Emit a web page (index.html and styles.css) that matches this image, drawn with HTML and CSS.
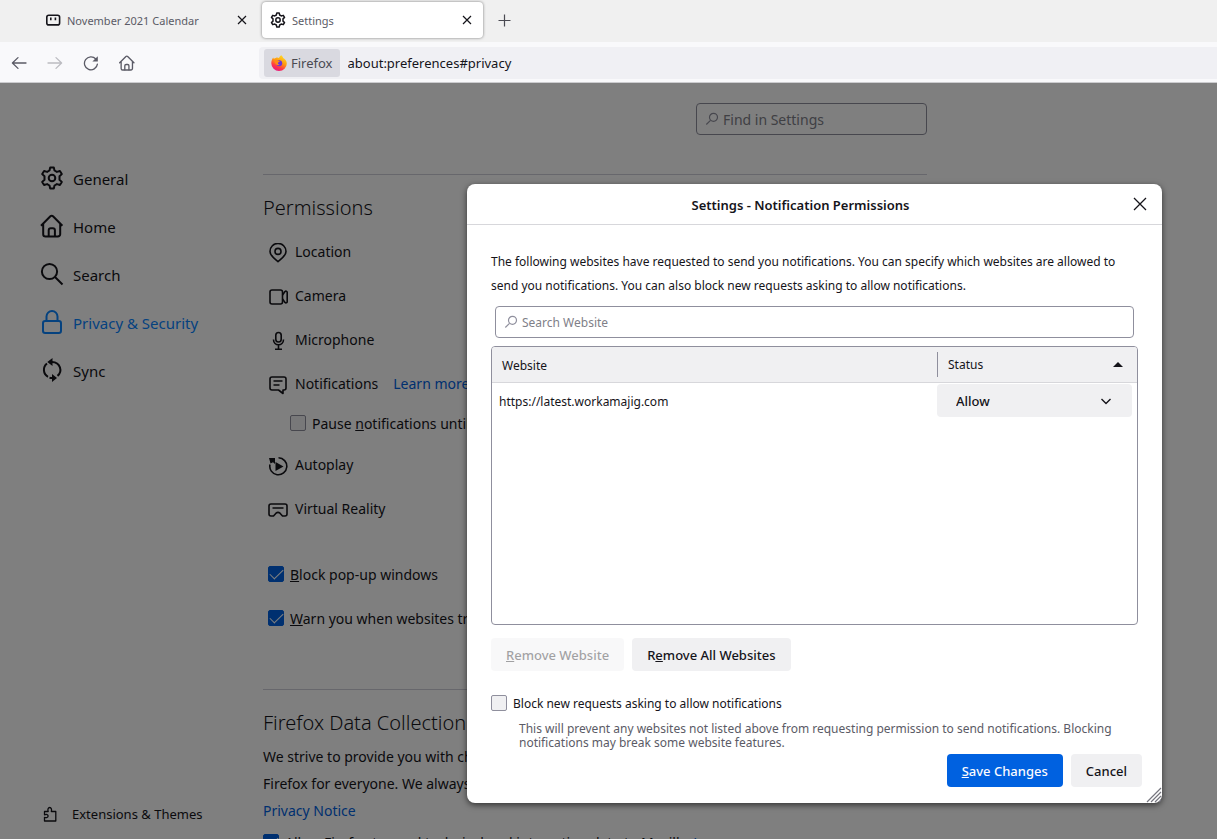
FILE: index.html
```html
<!DOCTYPE html>
<html lang="en">
<head>
    <meta charset="UTF-8">
    <meta name="viewport" content="width=device-width, initial-scale=1.0">
    <title>Settings</title>
    <link rel="stylesheet" href="styles.css">
</head>
<body>

    <!-- Tab strip -->
    <div class="tabs">
        <div class="tab">
            <svg class="icon16" viewBox="0 0 16 16" fill="none" stroke="#15141a" stroke-width="1.6"><rect x="1.8" y="3.3" width="12.8" height="9.6" rx="2"/><path d="M5.8 5.6v2.6M10.4 5.6v2.6"/></svg>
            <span class="tab-title">November 2021 Calendar</span>
            <button class="icon-btn" aria-label="Close tab"><svg class="icon16" viewBox="0 0 16 16" stroke="#15141a" stroke-width="1.2"><path d="M4 4l8 8M12 4l-8 8"/></svg></button>
        </div>
        <div class="tab tab-active">
            <svg class="icon16" viewBox="0 0 24 24" fill="none" stroke="#15141a" stroke-width="2.2" stroke-linejoin="round"><use href="#gear"/></svg>
            <span class="tab-title">Settings</span>
            <button class="icon-btn" aria-label="Close tab"><svg class="icon16" viewBox="0 0 16 16" stroke="#15141a" stroke-width="1.2"><path d="M4 4l8 8M12 4l-8 8"/></svg></button>
        </div>
        <button class="icon-btn new-tab" aria-label="New tab"><svg class="icon16" viewBox="0 0 16 16" stroke="#4a4a52" stroke-width="1.2"><path d="M8.500 2.500v12M2.500 8.500h12"/></svg></button>
    </div>

    <!-- Toolbar -->
    <div class="toolbar">
        <div class="toolbar-buttons">
            <button class="icon-btn" aria-label="Back"><svg class="icon16" viewBox="0 0 16 16" fill="none" stroke="#5b5b66" stroke-width="1.3" stroke-linecap="round" stroke-linejoin="round"><path d="M15 8H1.600M7 2.600L1.400 8 7 13.400"/></svg></button>
            <button class="icon-btn" aria-label="Forward"><svg class="icon16" viewBox="0 0 16 16" fill="none" stroke="#bcbcc1" stroke-width="1.3" stroke-linecap="round" stroke-linejoin="round"><path d="M1 8h13.400M9 2.600L14.600 8 9 13.400"/></svg></button>
            <button class="icon-btn" aria-label="Reload"><svg class="icon16" viewBox="0 0 16 16" fill="none" stroke="#5b5b66" stroke-width="1.3" stroke-linecap="round"><path d="M14.400 9.200A6.500 6.500 0 1 1 12.800 4"/><path d="M14.800 1.200v5.400H9.400z" fill="#5b5b66" stroke="none"/></svg></button>
            <button class="icon-btn" aria-label="Home"><svg class="icon16" viewBox="0 0 24 24" fill="none" stroke="#5b5b66" stroke-width="2" stroke-linecap="round" stroke-linejoin="round"><use href="#house"/></svg></button>
        </div>
        <div class="urlbar">
            <div class="identity">
                <svg class="icon16" viewBox="0 0 16 16">
                    <defs>
                        <linearGradient id="flame" x1="0.8" y1="0" x2="0.3" y2="1"><stop offset="0" stop-color="#ffe226"/><stop offset=".45" stop-color="#ff980e"/><stop offset=".75" stop-color="#ff3647"/><stop offset="1" stop-color="#e31587"/></linearGradient>
                    </defs>
                    <path fill="url(#flame)" d="M10.300.2c1.200 1 1.600 1.900 1.900 2.700 2 1 3.600 3.100 3.600 5.600A7.700 7.400 0 0 1 8.100 15.900 7.700 7.600 0 0 1 .3 8.300C.3 6 1 4 2.200 2.400l.7 1.500C3.400 3.300 4 3 4.700 2.900 6 2.300 7 2.600 8 3c.4-1.200 1.100-2.100 2.300-2.800z"/>
                    <circle cx="8.200" cy="8.200" r="3" fill="#6a35d8"/>
                    <path fill="#ff8a16" d="M3 5.200c1.800-1 3.200-.6 4.300.5l1.500.3c-.2 1-1.300 1.200-1.800 1.700-.3.900.5 1.800 1.700 1.700-1 1.200-3.200 1-4-.3C4.100 8 3.300 6.800 3 5.200z"/>
                </svg>
                <span>Firefox</span>
            </div>
            <input class="url" type="text" aria-label="Address" value="about:preferences#privacy">
        </div>
    </div>

    <!-- Settings page -->
    <div class="page">
        <nav class="sidebar">
            <ul class="categories">
                <li><a href="#general"><svg class="icon24" viewBox="0 0 24 24"><g id="gear"><circle cx="12" cy="12" r="3.300"/><path d="M10.200 1.400h3.600l.7 3.100 2.400 1.400 3-.9 1.900 3.100-2.300 2.200v3.400l2.300 2.200-1.900 3.100-3-.9-2.400 1.400-.7 3.100h-3.600l-.7-3.100-2.400-1.400-3 .9-1.900-3.100 2.300-2.200v-3.400L2.200 8.100l1.900-3.100 3 .9 2.400-1.400z"/></g></svg><span>General</span></a></li>
                <li><a href="#home"><svg class="icon24" viewBox="0 0 24 24"><g id="house"><path d="M1 11.700L10.400 2.300a1.800 1.800 0 0 1 2.600 0l9.400 9.400M3.200 10v10.200a2.300 2.300 0 0 0 2.300 2.300h12.400a2.300 2.300 0 0 0 2.300-2.300V10"/><path d="M8.700 22.300v-6a2 2 0 0 1 2-2h2.200a2 2 0 0 1 2 2v6"/></g></svg><span>Home</span></a></li>
                <li><a href="#search"><svg class="icon24" viewBox="0 0 24 24"><circle cx="9.500" cy="9.500" r="7.600"/><path d="M15 15l7.500 7.500"/></svg><span>Search</span></a></li>
                <li><a class="selected" href="#privacy"><svg class="icon24" viewBox="0 0 24 24"><rect x="3" y="11" width="18" height="12" rx="2.200"/><path d="M6.500 11V6.500a5.500 5.500 0 0 1 11 0V11"/></svg><span>Privacy &amp; Security</span></a></li>
                <li><a href="#sync"><svg class="icon24" viewBox="0 0 24 24"><path d="M7 5.500A8 8 0 0 0 8 18.800M12 3.900c8.500.3 10.800 9.700 5.500 14M9.500 19.600c1 .4 2 .5 3.500.4"/><path class="solid" d="M12.500 0v8L7.300 4zM12 16v8l5-4z"/></svg><span>Sync</span></a></li>
            </ul>
            <a class="addons" href="#addons"><svg class="icon16" viewBox="0 0 16 16"><path d="M2.500 15v-3.700c2 .8 3.600.2 3.600-1.300s-1.600-2-3.600-1.200V5.500h3.700c-.8-2.200 0-4 1.500-4s2.300 1.800 1.600 4h4.500V15z"/></svg>Extensions &amp; Themes</a>
        </nav>

        <main class="pane">
            <div class="search-row">
                <label class="search-box">
                    <svg class="icon14" viewBox="0 0 14 14"><circle cx="8.500" cy="5.300" r="4"/><path d="M5.500 8.300L1.300 12.500"/></svg>
                    <input type="text" placeholder="Find in Settings" aria-label="Find in Settings">
                </label>
            </div>

            <section class="group">
                <h2>Permissions</h2>
                <div class="perm"><svg class="icon20" viewBox="0 0 20 20"><path d="M10 18.700C7.500 16.500 2 12.600 2 8.400a8 8 0 0 1 16 0c0 4.200-5.500 8.100-8 10.300z"/><circle cx="10" cy="8.400" r="3"/></svg>Location</div>
                <div class="perm"><svg class="icon20" viewBox="0 0 20 20"><rect x="2" y="3" width="12.500" height="14" rx="2"/><path d="M14.500 8l2.500-3.500c.7-.7 2.200-.4 2.200.7v9.600c0 1.100-1.500 1.400-2.200.7l-2.500-3.500"/></svg>Camera</div>
                <div class="perm"><svg class="icon20" viewBox="0 0 20 20"><rect x="7.800" y="1.500" width="5.400" height="9.500" rx="2.700"/><path d="M5.500 8.500c0 7 10 7 10 0M10.500 14v4M7 18.200h7"/></svg>Microphone</div>
                <div class="perm"><svg class="icon20" viewBox="0 0 20 20"><path d="M4 2h12a2 2 0 0 1 2 2v9a2 2 0 0 1-2 2h-1v3.500L10.500 15H4a2 2 0 0 1-2-2V4a2 2 0 0 1 2-2zM5.500 6h9M5.500 10h6"/></svg>Notifications <a class="link" href="#learn">Learn more</a></div>
                <label class="check indent"><input type="checkbox"><span>Pause <u>n</u>otifications until Firefox restarts</span></label>
                <div class="perm"><svg class="icon20" viewBox="0 0 20 20"><path d="M10.500 1.800A8.500 8.500 0 1 1 2 8.500"/><path class="solid" d="M1 2h6v6L5 6.200 2.500 7.500zM7.500 6l8 4.500-8 4.500z"/></svg>Autoplay</div>
                <div class="perm"><svg class="icon20" viewBox="0 0 20 20"><path d="M3 4h14a2 2 0 0 1 2 2v8a2 2 0 0 1-2 2h-2.500L12 13.200a3 3 0 0 0-4 0L5.500 16H3a2 2 0 0 1-2-2V6a2 2 0 0 1 2-2zM4.500 8h11"/></svg>Virtual Reality</div>
                <div class="checks">
                    <label class="check"><input type="checkbox" checked><span><u>B</u>lock pop-up windows</span></label>
                    <label class="check"><input type="checkbox" checked><span><u>W</u>arn you when websites try to install add-ons</span></label>
                </div>
            </section>

            <section class="group data">
                <h2>Firefox Data Collection and Use</h2>
                <p>We strive to provide you with choices and collect only what we need to provide and improve<br>Firefox for everyone. We always ask permission before receiving personal information.</p>
                <a class="link" href="#notice">Privacy Notice</a>
                <label class="check"><input type="checkbox" checked><span>Allow Firefox to send technical and interaction data to Mozilla</span> <a class="link" href="#data">Learn more</a></label>
            </section>
        </main>

        <div class="overlay"></div>

        <!-- Notification permissions dialog -->
        <div class="dialog" role="dialog" aria-labelledby="dialogTitle">
            <div class="dialog-header">
                <h1 id="dialogTitle">Settings - Notification Permissions</h1>
                <button class="icon-btn dialog-close" aria-label="Close"><svg class="icon20" viewBox="0 0 20 20"><path d="M4 4l12 12M16 4L4 16"/></svg></button>
            </div>
            <div class="dialog-body">
                <p class="intro">The following websites have requested to send you notifications. You can specify which websites are allowed to send you notifications. You can also block new requests asking to allow notifications.</p>
                <label class="search-box">
                    <svg class="icon14" viewBox="0 0 14 14"><circle cx="8.500" cy="5.300" r="4"/><path d="M5.500 8.300L1.300 12.500"/></svg>
                    <input type="text" placeholder="Search Website" aria-label="Search Website">
                </label>
                <div class="list">
                    <table>
                        <thead>
                            <tr>
                                <th>Website</th>
                                <th class="status"><div class="status-head">Status <svg class="sort" viewBox="0 0 10 5"><path d="M0 5l5-5 5 5z"/></svg></div></th>
                            </tr>
                        </thead>
                        <tbody>
                            <tr>
                                <td>https://latest.workamajig.com</td>
                                <td class="status"><select aria-label="Status"><option>Allow</option><option>Block</option></select><svg class="chevron" viewBox="0 0 12 12"><path d="M1.500 4L6 8.500 10.500 4"/></svg></td>
                            </tr>
                        </tbody>
                    </table>
                </div>
                <div class="row">
                    <button class="btn" disabled><u>R</u>emove Website</button>
                    <button class="btn">R<u>e</u>move All Websites</button>
                </div>
                <label class="check block-check"><input type="checkbox"><span>Block new requests asking to allow notifications</span></label>
                <p class="hint">This will prevent any websites not listed above from requesting permission to send notifications. Blocking notifications may break some website features.</p>
            </div>
            <div class="row dialog-buttons">
                <button class="btn btn-primary"><u>S</u>ave Changes</button>
                <button class="btn">Cancel</button>
            </div>
            <svg class="resizer" viewBox="0 0 16 16"><path d="M1 15L15 1M5 15L15 5M9 15l6-6M13 15l2-2"/></svg>
        </div>
    </div>

</body>
</html>
```
FILE: styles.css
```css
* {
    box-sizing: border-box;
}
body {
    margin: 0;
    height: 100vh;
    display: flex;
    flex-direction: column;
    overflow: hidden;
    font-family: "Noto Sans", "Open Sans", sans-serif;
    font-size: 14px;
    color: #15141a;
}
button, input, select {
    font: inherit;
    color: inherit;
}
svg {
    flex: none;
    display: block;
}
.icon14 { width: 14px; height: 14px; }
.icon16 { width: 16px; height: 16px; }
.icon20 { width: 20px; height: 20px; }
.icon24 { width: 24px; height: 24px; }
.icon-btn {
    padding: 0;
    border: 0;
    background: none;
}

/* Tabs */
.tabs {
    flex: none;
    display: flex;
    align-items: center;
    height: 42px;
    padding: 0 0 2px 29px;
    background: #f0f0f0;
    font-size: 11px;
}
.tab {
    display: flex;
    align-items: center;
    gap: 6px;
    width: 233px;
    height: 36px;
    padding: 0 12px 0 16px;
    color: #5b5b66;
}
.tab-active {
    width: 221px;
    padding: 0 8px;
    border-radius: 4px;
    background: #fff;
    box-shadow: 0 0 3px rgba(0, 0, 0, 0.5);
}
.tab-title {
    flex: 1;
}
.new-tab {
    margin-left: 13px;
}

/* Toolbar */
.toolbar {
    flex: none;
    display: flex;
    align-items: center;
    height: 41px;
    padding-top: 1px;
    background: #f9f9fb;
    border-bottom: 1px solid #cccccf;
}
.toolbar-buttons {
    display: flex;
    gap: 20px;
    width: 259px;
    padding-left: 11px;
}
.urlbar {
    flex: 1;
    display: flex;
    align-items: center;
    gap: 8px;
    height: 32px;
    padding-left: 5px;
    border-radius: 4px 0 0 4px;
    background: #f0f0f4;
}
.identity {
    display: flex;
    align-items: center;
    gap: 4px;
    height: 28px;
    padding: 0 7px;
    border-radius: 3px;
    background: #d9d9e0;
    color: #4a4a52;
    font-size: 13px;
}
.url {
    flex: 1;
    padding: 0;
    border: 0;
    background: none;
    font-size: 13px;
}

/* Settings page */
.page {
    position: relative;
    flex: 1;
    min-height: 0;
    display: flex;
    overflow: hidden;
    background: #fff;
}
.page svg {
    fill: none;
    stroke: #15141a;
    stroke-width: 2;
    stroke-linejoin: round;
}
.page .solid {
    fill: #15141a;
    stroke: none;
}
.sidebar {
    display: flex;
    flex-direction: column;
    justify-content: space-between;
    width: 263px;
    padding: 71px 0 16px 40px;
}
.categories {
    margin: 0;
    padding: 0;
    list-style: none;
    font-size: 15px;
}
.categories a {
    display: flex;
    align-items: center;
    gap: 9px;
    height: 48px;
    color: inherit;
    text-decoration: none;
}
.categories span {
    padding-top: 2px;
}
.categories .selected {
    color: #0a84ff;
}
.page .selected svg {
    stroke: #0a84ff;
}
.addons {
    display: flex;
    align-items: center;
    gap: 14px;
    padding-left: 2px;
    color: inherit;
    font-size: 13px;
    text-decoration: none;
}
.page .icon16 {
    stroke-width: 1.3;
}
.page .icon20 {
    stroke-width: 1.6;
}
.pane {
    width: 664px;
}
.search-row {
    display: flex;
    justify-content: flex-end;
    padding: 20px 0 39px;
}
.search-row .search-box {
    width: 231px;
}
.search-box {
    display: flex;
    align-items: center;
    gap: 4px;
    height: 32px;
    padding: 0 8px;
    border: 1px solid #8f8f9d;
    border-radius: 4px;
}
.page .search-box svg {
    stroke: #8f8f9d;
    stroke-width: 1.2;
}
.search-box input {
    flex: 1;
    min-width: 0;
    padding: 0;
    border: 0;
    background: none;
}
.search-box input::placeholder {
    color: #808088;
}
.group {
    border-top: 1px solid #cfcfd8;
}
.group h2 {
    margin: 17px 0 12px;
    font-size: 20px;
    font-weight: 300;
    line-height: 32px;
}
.group p {
    margin: 0;
    line-height: 27px;
}
.perm {
    display: flex;
    align-items: center;
    gap: 7px;
    height: 30px;
    margin: 0 0 14px 5px;
}
.perm svg {
    margin-top: 3px;
}
.link {
    color: #0061e0;
    line-height: 27px;
    text-decoration: none;
}
.perm .link {
    margin-left: 8px;
}
.check {
    display: flex;
    align-items: center;
    gap: 6px;
    height: 24px;
}
.check input {
    appearance: none;
    display: grid;
    place-items: center;
    width: 16px;
    height: 16px;
    margin: 0;
    border: 1px solid #8f8f9d;
    border-radius: 2px;
    background: #f0f0f2;
}
.check input:checked {
    border-color: #0061e0;
    background: #0061e0;
}
.check input:checked::before {
    content: "";
    width: 12px;
    height: 6px;
    margin-bottom: 4px;
    border: solid #fff;
    border-width: 0 0 1px 1px;
    transform: rotate(-45deg);
}
.indent {
    margin: -1px 0 14px 27px;
}
.checks {
    display: grid;
    gap: 20px;
    padding: 25px 0 59px 5px;
}
.data h2 {
    margin-bottom: 4px;
}
.data .check {
    margin-top: 6px;
}
.overlay {
    position: absolute;
    inset: 0;
    background: rgba(0, 0, 0, 0.5);
}

/* Dialog */
.dialog {
    position: absolute;
    top: 101px;
    left: 467px;
    width: 695px;
    border-radius: 8px;
    background: #fff;
    box-shadow: 0 2px 6px rgba(0, 0, 0, 0.6);
    font-size: 12px;
}
.dialog-header {
    display: flex;
    align-items: center;
    height: 41px;
    padding: 0 12px 0 4px;
    border-bottom: 1px solid #d7d7db;
}
.dialog-header h1 {
    flex: 1;
    margin: 0;
    padding-top: 2px;
    font-size: 13px;
    font-weight: 600;
    text-align: center;
}
.page .dialog-close svg {
    stroke-width: 1.3;
}
.dialog-body {
    padding: 25px 24px 0;
}
.intro {
    margin: 0 0 8px;
    line-height: 24px;
}
.dialog .search-box {
    margin: 0 4px 8px;
}
.list {
    height: 279px;
    border: 1px solid #8f8f9d;
    border-radius: 4px;
    overflow: hidden;
}
table {
    width: 100%;
    border-collapse: collapse;
}
th {
    height: 35px;
    padding: 2px 10px 0;
    border-bottom: 1px solid #d7d7db;
    background: #f0f0f2;
    font-weight: 400;
    text-align: left;
}
td {
    position: relative;
    height: 36px;
    padding: 2px 7px 0;
}
.status {
    width: 199px;
    padding: 0;
}
td.status {
    width: 200px;
}
.status-head {
    display: flex;
    align-items: center;
    justify-content: space-between;
    height: 25px;
    padding: 0 14px 0 10px;
    border-left: 1px solid #8f8f9d;
}
.page .sort {
    width: 10px;
    height: 5px;
    fill: #15141a;
    stroke: none;
}
select {
    appearance: none;
    width: 195px;
    height: 33px;
    padding: 1px 19px 0;
    border: 0;
    border-radius: 4px;
    background: #f0f0f2;
    font-size: 13px;
    font-weight: 500;
}
.page .chevron {
    position: absolute;
    top: 12px;
    right: 25px;
    width: 12px;
    height: 12px;
    stroke-width: 1.4;
    pointer-events: none;
}
.row {
    display: flex;
    gap: 8px;
    margin-top: 13px;
}
.btn {
    height: 33px;
    padding: 0 15px;
    border: 0;
    border-radius: 4px;
    background: #f0f0f2;
    font-size: 13px;
    font-weight: 500;
}
.btn:disabled {
    opacity: 0.4;
}
.btn-primary {
    background: #0061e0;
    color: #fbfbfe;
}
.block-check {
    margin-top: 20px;
}
.hint {
    margin: 7px 0 0 28px;
    color: #5b5b66;
    line-height: 14px;
}
.dialog-buttons {
    justify-content: flex-end;
    margin-top: 4px;
    padding: 0 20px 16px;
}
.page .resizer {
    position: absolute;
    right: 0;
    bottom: 0;
    width: 16px;
    height: 16px;
    stroke: #76767f;
    stroke-width: 1.2;
}
```
